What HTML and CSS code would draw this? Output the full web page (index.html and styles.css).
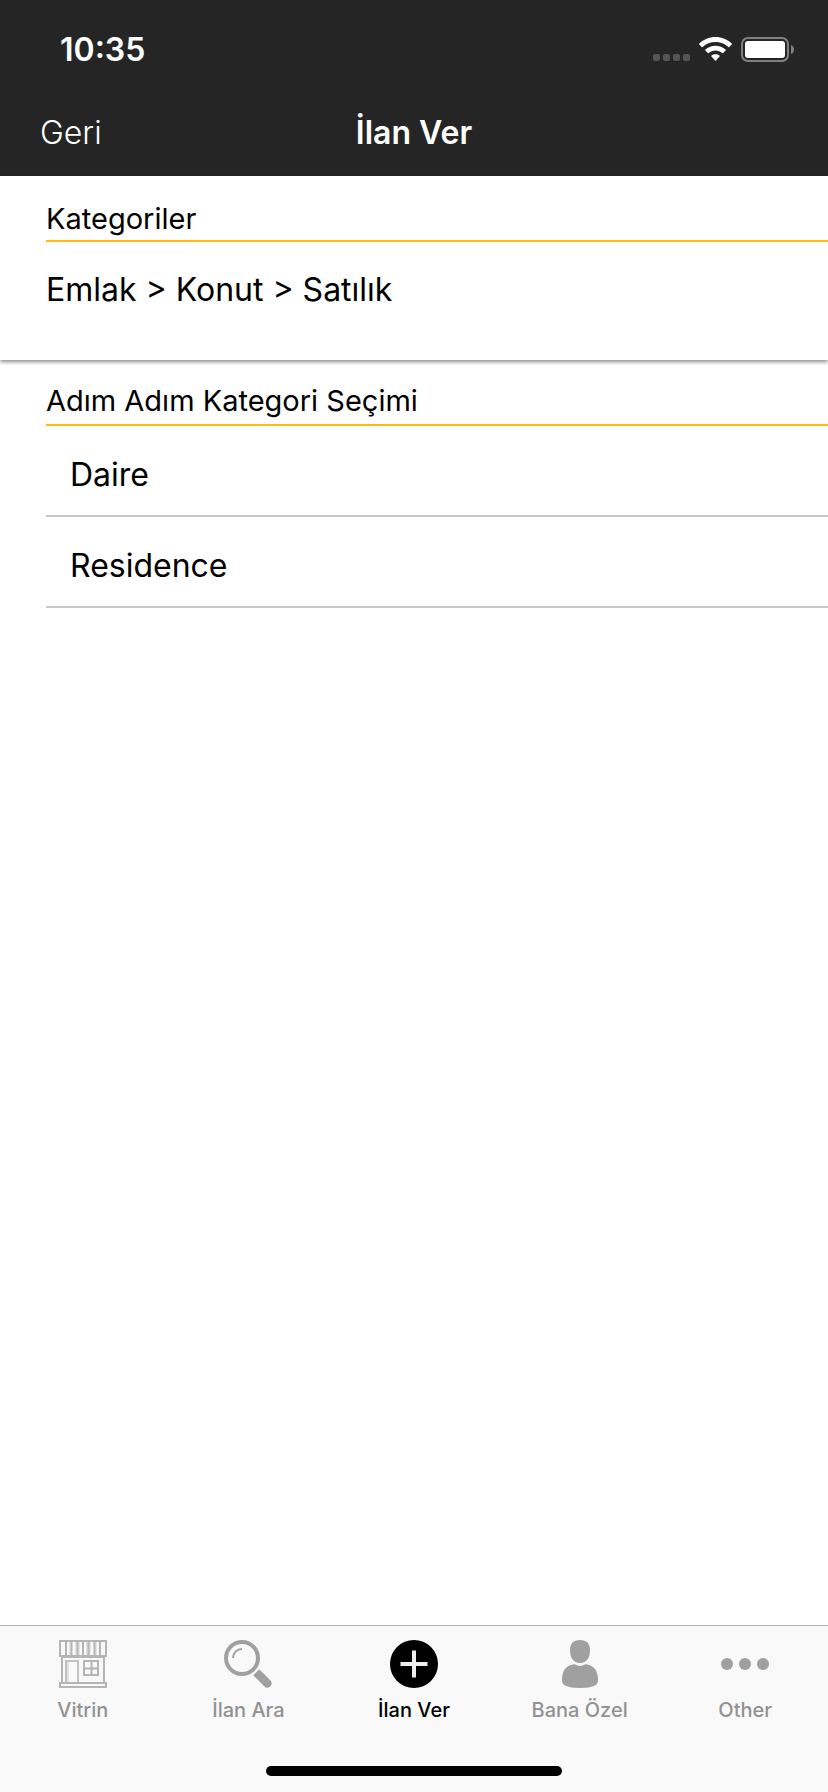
FILE: index.html
```html
<!DOCTYPE html>
<html lang="tr">
<head>
<meta charset="utf-8">
<meta name="viewport" content="width=device-width, initial-scale=1">
<title>İlan Ver</title>
<link rel="stylesheet" href="styles.css">
</head>
<body>
<div class="app">
  <header class="header">
    <div class="status">
      <time class="status-time">10:35</time>
      <div class="status-icons">
        <svg class="signal" width="37" height="25" viewBox="0 0 37 25" fill="#555" aria-hidden="true">
          <rect x="0" y="17" width="7" height="7" rx="2"/><rect x="10" y="17" width="7" height="7" rx="2"/><rect x="20" y="17" width="7" height="7" rx="2"/><rect x="30" y="17" width="7" height="7" rx="2"/>
        </svg>
        <svg class="wifi" width="33" height="25" viewBox="0 0 33 25" fill="#fff" aria-hidden="true">
          <path d="M16.500 0C10.300 0 4.500 2.400 .3 6.500Q-.2 7 .3 7.500L2.700 9.900Q3.200 10.400 3.700 9.900C7.100 6.800 11.600 5 16.500 5S25.900 6.800 29.300 9.900Q29.800 10.400 30.300 9.900L32.700 7.500Q33.200 7 32.700 6.500C28.500 2.400 22.700 0 16.500 0Z"/>
          <path d="M16.500 8.700C12.700 8.700 9.200 10.100 6.400 12.600Q5.900 13.100 6.400 13.600L8.800 16Q9.300 16.500 9.800 16C11.600 14.500 14 13.500 16.500 13.500S21.400 14.500 23.200 16Q23.700 16.500 24.200 16L26.600 13.600Q27.100 13.100 26.600 12.600C23.800 10.100 20.300 8.700 16.500 8.700Z"/>
          <path d="M16.500 17.200C15 17.200 13.600 17.700 12.500 18.600Q12 19.100 12.500 19.600L16 23.400Q16.500 23.900 17 23.400L20.500 19.600Q21 19.100 20.500 18.600C19.400 17.700 18 17.200 16.500 17.200Z"/>
        </svg>
        <svg class="battery" width="53" height="25" viewBox="0 0 53 25" aria-hidden="true">
          <rect x="1" y="1" width="46" height="23" rx="6" fill="none" stroke="#808080" stroke-width="2"/>
          <rect x="4" y="4" width="40" height="17" rx="3" fill="#fff"/>
          <path d="M50 8C52 9 53 10.500 53 12.500S52 16 50 17Z" fill="#808080"/>
        </svg>
      </div>
    </div>
    <div class="navbar">
      <button class="back" type="button">Geri</button>
      <h1 class="title">İlan Ver</h1>
    </div>
  </header>
  <main class="content">
    <section class="summary">
      <h2 class="heading summary-heading">Kategoriler</h2>
      <p class="path">Emlak &gt; Konut &gt; Satılık</p>
    </section>
    <section class="steps">
      <h2 class="heading steps-heading">Adım Adım Kategori Seçimi</h2>
      <ul class="options">
        <li><button class="option" type="button">Daire</button></li>
        <li><button class="option" type="button">Residence</button></li>
      </ul>
    </section>
  </main>
  <footer class="footer">
    <nav class="tabs">
      <a class="tab" href="#vitrin">
        <svg width="48" height="48" viewBox="0 0 48 48" fill="none" stroke="#b5b5b5" stroke-width="2" aria-hidden="true">
          <path d="M10 2H12V16H10ZM16 2H18V16H16ZM19 2H21V16H19ZM27 2H29V16H27ZM30 2H32V16H30ZM36 2H38V16H36Z" fill="#e4e4e4" stroke="none"/>
          <path d="M1 1H47V16H1ZM7 1V16M12.500 1V16M18.500 1V16M24 1V16M29.500 1V16M35.500 1V16M41 1V16"/>
          <path d="M3 17V42M45 17V42M3 17H45M1 43H47V47H1Z"/>
          <path d="M7 22H10V42H7Z" fill="#e2e2e2" stroke="none"/>
          <path d="M7 42V21H19V42" stroke="#c2c2c2"/>
          <path d="M25 21H39V35H25ZM32.500 21V35M25 28.500H39"/>
        </svg>
        <span>Vitrin</span>
      </a>
      <a class="tab" href="#ara">
        <svg width="48" height="48" viewBox="0 0 48 48" fill="none" stroke="#a0a0a0" aria-hidden="true">
          <circle cx="18" cy="18" r="16" stroke-width="4"/>
          <path d="M9 18C9 13 13 9 18 9" stroke-width="2"/>
          <path d="M30 34.500L34.500 30Q35.500 29.500 36.500 30.500L46.500 40.500C48 42 48 44 47 45.500L45.500 47C44 48 42 48 40.500 46.500L30.500 36.500Q29.500 35.500 30 34.500Z" fill="#a0a0a0" stroke="none"/>
        </svg>
        <span>İlan Ara</span>
      </a>
      <a class="tab tab-active" href="#ver" aria-current="page">
        <svg width="48" height="48" viewBox="0 0 48 48" aria-hidden="true">
          <circle cx="24" cy="24" r="24" fill="#000"/>
          <path d="M24 10.500V37.500M10.500 24H37.500" stroke="#eee" stroke-width="4"/>
        </svg>
        <span>İlan Ver</span>
      </a>
      <a class="tab" href="#bana-ozel">
        <svg width="48" height="48" viewBox="0 0 48 48" fill="#a0a0a0" aria-hidden="true">
          <path d="M24 0C30.500 0 34 3.500 34 10C34 18 30.500 23 24 23S14 18 14 10C14 3.500 17.500 0 24 0Z"/>
          <path d="M16.500 24.500Q19 24 20.500 25Q24 27 27.500 25Q29 24 31.500 24.500C39 26 42 32 42 40Q42 43.500 39 45.500Q34 48 24 48T9 45.500Q6 43.500 6 40C6 32 9 26 16.500 24.500Z"/>
        </svg>
        <span>Bana Özel</span>
      </a>
      <a class="tab" href="#other">
        <svg width="48" height="48" viewBox="0 0 48 48" fill="#a0a0a0" aria-hidden="true">
          <circle cx="6" cy="24" r="6"/><circle cx="24" cy="24" r="6"/><circle cx="42" cy="24" r="6"/>
        </svg>
        <span>Other</span>
      </a>
    </nav>
    <div class="home-indicator"></div>
  </footer>
</div>
</body>
</html>
```
FILE: styles.css
```css
* {
  box-sizing: border-box;
}

body,
h1,
h2,
p,
ul {
  margin: 0;
  padding: 0;
}

body {
  font-family: Inter, Roboto, "Liberation Sans", sans-serif;
  color: #000;
  background: #fff;
}

button {
  font: inherit;
  color: inherit;
  background: none;
  border: 0;
  cursor: pointer;
}

.app {
  display: flex;
  flex-direction: column;
  min-height: 100vh;
}

.header {
  color: #fff;
  background: #252525;
}

.status {
  display: flex;
  align-items: center;
  justify-content: space-between;
  padding: 30px 34px 18px 60px;
}

.status-time {
  font-size: 32px;
  font-weight: 600;
  line-height: 40px;
}

.status-icons {
  display: flex;
  gap: 9px;
  padding-bottom: 1px;
}

.navbar {
  display: grid;
  grid-template-columns: 1fr auto 1fr;
  align-items: center;
  padding: 21px 40px 19px;
  line-height: 48px;
}

.back {
  justify-self: start;
  padding: 0;
  font-size: 32px;
  font-weight: 300;
}

.title {
  font-size: 32px;
  font-weight: 600;
}

.content {
  flex: 1;
}

.summary {
  position: relative;
  padding: 23px 0 46px 46px;
  box-shadow: 0 2px 4px rgba(0, 0, 0, 0.45);
}

.heading {
  font-size: 29px;
  font-weight: 400;
  line-height: 40px;
  border-bottom: 2px solid #ffb90f;
}

.summary-heading {
  padding-bottom: 1px;
}

.path {
  padding-top: 24px;
  font-size: 32px;
  line-height: 48px;
}

.steps {
  padding: 21px 0 0 46px;
}

.steps-heading {
  padding-bottom: 3px;
}

.options {
  list-style: none;
}

.option {
  display: block;
  width: 100%;
  padding: 25px 24px 16px;
  font-size: 32px;
  line-height: 48px;
  text-align: left;
  border-bottom: 2px solid #c8c7cc;
}

.footer {
  padding: 14px 0 16px;
  background: #f9f9f9;
  border-top: 1px solid #b2b2b2;
}

.tabs {
  display: grid;
  grid-template-columns: repeat(5, 1fr);
}

.tab {
  display: flex;
  flex-direction: column;
  align-items: center;
  gap: 8px;
  font-size: 20px;
  font-weight: 500;
  line-height: 28px;
  color: #929292;
  text-decoration: none;
}

.tab-active {
  color: #000;
}

.home-indicator {
  width: 296px;
  height: 10px;
  margin: 42px auto 0;
  background: #000;
  border-radius: 5px;
}
```
